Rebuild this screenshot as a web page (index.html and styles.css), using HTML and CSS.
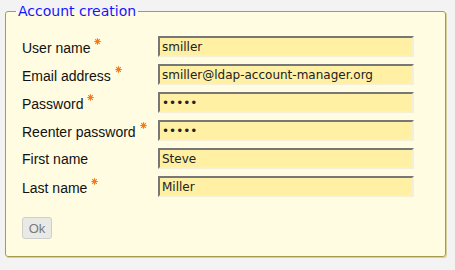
FILE: index.html
```html
<!DOCTYPE html>
<html>
<head>
<meta charset="utf-8">
<link rel="stylesheet" href="styles.css">
</head>
<body>
<fieldset class="box">
  <legend class="box-title">Account creation</legend>
  <div class="form">
    <label class="lbl">User name<svg class="req" viewBox="0 0 8 8"><circle cx="4" cy="4" r="2.2" fill="#f9b26a"/><path d="M4 0.3V7.7M0.3 4H7.7M1.4 1.4L6.6 6.6M6.6 1.4L1.4 6.6" stroke="#f07c1e" stroke-width="1.2"/></svg></label>
    <input class="field" type="text" value="smiller">
    <label class="lbl">Email address<svg class="req" viewBox="0 0 8 8"><circle cx="4" cy="4" r="2.2" fill="#f9b26a"/><path d="M4 0.3V7.7M0.3 4H7.7M1.4 1.4L6.6 6.6M6.6 1.4L1.4 6.6" stroke="#f07c1e" stroke-width="1.2"/></svg></label>
    <input class="field" type="text" value="smiller@ldap-account-manager.org">
    <label class="lbl">Password<svg class="req" viewBox="0 0 8 8"><circle cx="4" cy="4" r="2.2" fill="#f9b26a"/><path d="M4 0.3V7.7M0.3 4H7.7M1.4 1.4L6.6 6.6M6.6 1.4L1.4 6.6" stroke="#f07c1e" stroke-width="1.2"/></svg></label>
    <input class="field pw" type="text" value="•••••">
    <label class="lbl">Reenter password<svg class="req" viewBox="0 0 8 8"><circle cx="4" cy="4" r="2.2" fill="#f9b26a"/><path d="M4 0.3V7.7M0.3 4H7.7M1.4 1.4L6.6 6.6M6.6 1.4L1.4 6.6" stroke="#f07c1e" stroke-width="1.2"/></svg></label>
    <input class="field pw" type="text" value="•••••">
    <label class="lbl">First name</label>
    <input class="field" type="text" value="Steve">
    <label class="lbl">Last name<svg class="req" viewBox="0 0 8 8"><circle cx="4" cy="4" r="2.2" fill="#f9b26a"/><path d="M4 0.3V7.7M0.3 4H7.7M1.4 1.4L6.6 6.6M6.6 1.4L1.4 6.6" stroke="#f07c1e" stroke-width="1.2"/></svg></label>
    <input class="field" type="text" value="Miller">
  </div>
  <button class="btn" type="button">Ok</button>
</fieldset>
</body>
</html>
```

FILE: styles.css
```css
html, body {
  margin: 0;
  padding: 0;
  background: #f3f3f3;
  width: 455px;
  height: 270px;
  overflow: hidden;
}

.box {
  box-sizing: border-box;
  margin: 3px 0 0 5px;
  width: 441px;
  height: 254px;
  padding: 14px 16px 0 16px;
  background: #fffce1;
  border: 1px solid #a99b4c;
  border-radius: 3px;
  box-shadow: 1px 1px 0 #d9cf98;
}

.box-title {
  padding: 0 2px;
  margin-left: -6px;
  font-family: "DejaVu Sans", sans-serif;
  font-size: 14px;
  line-height: 16px;
  color: #1515ff;
}

.form {
  display: grid;
  grid-template-columns: 136px 256px;
  grid-auto-rows: 21px;
  row-gap: 7px;
  margin-top: 3px;
}

.lbl {
  align-self: center;
  font-family: "Liberation Sans", Arial, sans-serif;
  font-size: 14px;
  color: #111;
  white-space: nowrap;
}

.req {
  width: 7px;
  height: 7px;
  margin-left: 4px;
  vertical-align: 8px;
}

.field {
  box-sizing: border-box;
  width: 256px;
  height: 21px;
  margin: 0;
  padding: 0 0 0 2px;
  background: #fff0a3;
  border-style: solid;
  border-width: 2px;
  border-color: #777 #f3efd8 #f3efd8 #777;
  font-family: "DejaVu Sans", sans-serif;
  font-size: 12px;
  color: #222;
  outline: none;
}

.pw {
  font-size: 12px;
  letter-spacing: 0;
}

.btn {
  display: block;
  margin-top: 20px;
  width: 30px;
  height: 22px;
  padding: 0;
  background: #e9e9e6;
  border: 1px solid #cfcfca;
  border-radius: 3px;
  font-family: "Liberation Sans", Arial, sans-serif;
  font-size: 13px;
  color: #7a7a7a;
}
```
